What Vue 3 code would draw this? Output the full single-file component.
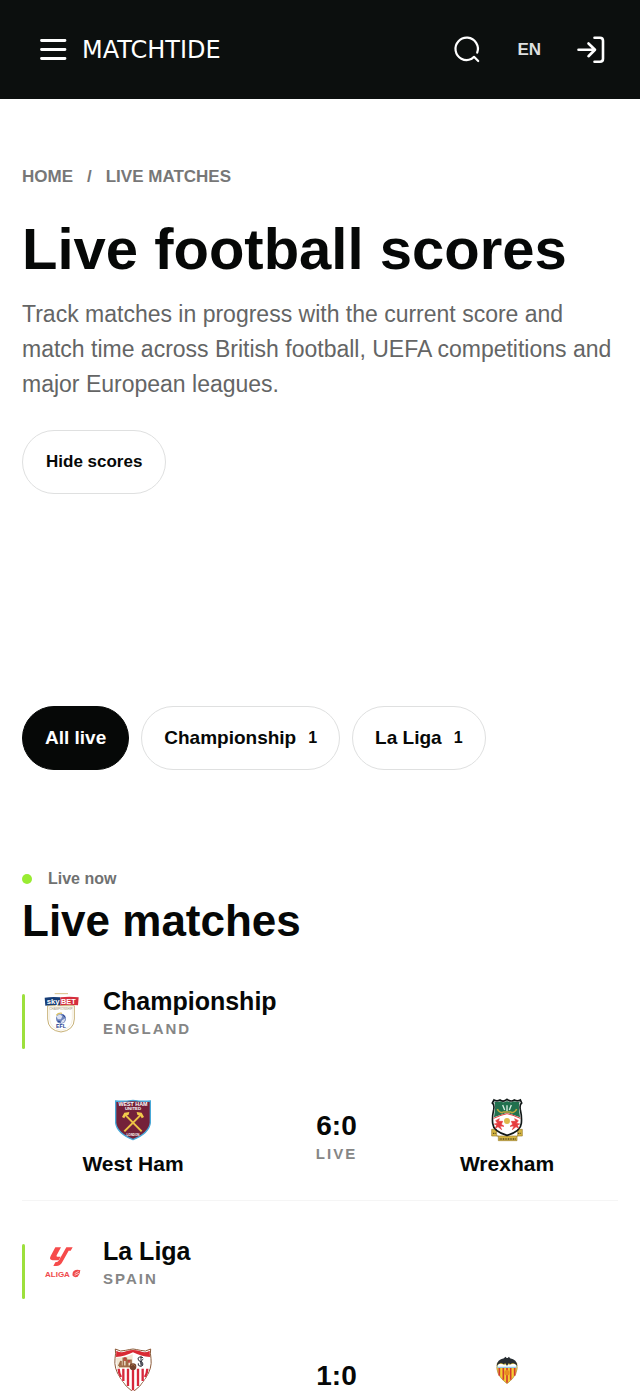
<template>
  <div class="page">
    <header class="topbar">
      <button class="icon-btn" type="button" aria-label="Menu">
        <svg width="28" height="28" viewBox="0 0 28 28" fill="none" stroke="#fff" stroke-width="2.8" stroke-linecap="round">
          <path d="M2.500 4.500h23.500M2.500 13.500h23.500M2.500 22.500h23.500" />
        </svg>
      </button>
      <a class="logo" href="#">MATCHTIDE</a>

      <div class="actions">
        <button class="icon-btn" type="button" aria-label="Search">
          <svg width="28" height="28" viewBox="0 0 28 28" fill="none" stroke="#fff" stroke-width="2.2" stroke-linecap="round" stroke-linejoin="round">
            <path d="M24.2 16.7A11.2 11.2 0 1 0 18.2 23.1L21 20.8L25.2 25" />
          </svg>
        </button>
        <button class="lang" type="button">EN</button>
        <button class="icon-btn" type="button" aria-label="Sign in">
          <svg width="28" height="28" viewBox="0 0 28 28" fill="none" stroke="#fff" stroke-width="2.6" stroke-linecap="round" stroke-linejoin="round">
            <path d="M17.500 1.800H23Q26 1.800 26 4.800V22.800Q26 25.800 23 25.800H17.500" />
            <path d="M1.500 13.800H17.500M11.500 7.500L18 13.800L11.500 20.200" />
          </svg>
        </button>
      </div>
    </header>

    <main class="content">
      <nav class="breadcrumb" aria-label="Breadcrumb">
        <a href="#">HOME</a>
        <span>/</span>
        <a href="#">LIVE MATCHES</a>
      </nav>

      <h1>Live football scores</h1>
      <p class="intro">
        Track matches in progress with the current score and match time across British football,
        UEFA competitions and major European leagues.
      </p>
      <button class="pill toggle" type="button" @click="hidden = !hidden">
        {{ hidden ? 'Show scores' : 'Hide scores' }}
      </button>

      <div class="filters">
        <button
          v-for="f in filters"
          :key="f.name"
          type="button"
          :class="['pill', { active: active === f.name }]"
          @click="active = f.name"
        >
          {{ f.name }}
          <span v-if="f.count" class="count">{{ f.count }}</span>
        </button>
      </div>

      <div class="live-now"><span class="dot"></span>Live now</div>
      <h2>Live matches</h2>

      <section v-for="l in shown" :key="l.name" class="league">
        <div class="league-head">
          <span class="bar"></span>
          <svg v-if="l.name === 'Championship'" class="crest" viewBox="0 0 108 120">
            <path d="M32 2H72" stroke="#d8c088" stroke-width="3" />
            <path d="M11 38V78Q12 112 51 117Q90 112 91 78V38Z" fill="#fff" stroke="#c8b176" stroke-width="3" />
            <path d="M17 42V78Q18 106 51 112Q84 106 85 78V42Z" fill="none" stroke="#eee5cf" stroke-width="2" />
            <path d="M2 14Q26 10 49 13V37Q26 34 4 38Z" fill="#173d77" />
            <path d="M49 13Q76 10 104 13L102 37Q76 34 49 37Z" fill="#d52e3d" />
            <text x="8" y="33" font-size="23" font-weight="700" fill="#fff">sky</text>
            <text x="51" y="33" font-size="22" font-weight="700" fill="#fff">BET</text>
            <text x="51" y="52" font-size="9" text-anchor="middle" fill="#a8997a">CHAMPIONSHIP</text>
            <circle cx="51" cy="77" r="15" fill="#7087bd" />
            <path d="M38 70L48 64L55 70L51 79L41 79ZM54 82L64 76L60 88L50 91Z" fill="#dce2f2" />
            <path d="M37 67Q43 59 54 61" stroke="#d9c064" stroke-width="4" fill="none" />
            <path d="M57 65L63 73M41 84L49 87" stroke="#263f90" stroke-width="3" />
            <text x="51" y="106" font-size="16" font-weight="700" text-anchor="middle" fill="#263e91">EFL</text>
          </svg>
          <svg v-else class="crest" viewBox="0 0 108 120">
            <path d="M34 13H51L38 37Q36 41 40 41H50L44 52H26Q14 50 20 39Z" fill="#f64b4b" />
            <path d="M67 13H86L80 23H74L55 57Q49 69 37 69H28L34 58Q42 58 45 52Z" fill="#f64b4b" />
            <text x="3" y="103" font-size="24" font-weight="700" fill="#f04a4b">ALIGA</text>
            <path d="M89 84Q99 77 109 82Q108 94 101 101Q92 105 86 98Q84 90 89 84Z" fill="#f04a4b" />
            <path d="M92 92L104 85M92 97L105 91" stroke="#fff" stroke-width="2" />
          </svg>
          <div>
            <h3>{{ l.name }}</h3>
            <span class="caption">{{ l.country }}</span>
          </div>
        </div>

        <div v-for="m in l.matches" :key="m.id" class="match">
          <div class="team">
            <svg v-if="m.id === 1" class="crest" viewBox="0 0 108 120">
              <path d="M2 3Q27 5 54 1Q81 5 106 3V68Q103 99 54 119Q5 99 2 68Z" fill="#742139" stroke="#48a9d8" stroke-width="4" />
              <text x="54" y="19" font-size="16" font-weight="700" text-anchor="middle" fill="#fff">WEST HAM</text>
              <text x="54" y="31" font-size="13" font-weight="700" text-anchor="middle" fill="#fff">UNITED</text>
              <path d="M30 44L80 94M78 44L28 94" stroke="#edc345" stroke-width="6" />
              <path d="M21 51L28 38L43 36L41 44L31 48L28 55ZM87 51L80 38L65 36L67 44L77 48L80 55Z" fill="#f2cc4c" />
              <text x="54" y="107" font-size="9" font-weight="700" text-anchor="middle" fill="#fff">LONDON</text>
            </svg>
            <svg v-else class="crest" viewBox="0 0 108 120">
              <path d="M1 -3Q17 7 32 1Q45 -2 54 -3Q63 -2 76 1Q91 7 107 -3Q105 8 108 26Q112 54 92 84Q76 111 54 126Q32 111 16 84Q-4 54 0 26Q3 8 1 -3Z" fill="#fff" stroke="#8c5a39" stroke-width="3" />
              <path d="M4 2Q17 10 33 4Q45 0 54 0Q63 0 76 4Q91 10 104 2L105 21Q78 19 54 7Q30 19 3 21Z" fill="#d92a34" />
              <path d="M5 54H103Q98 89 54 123Q10 89 5 54Z" fill="#fff" />
              <path d="M11 56Q11 68 18 81M25 56V93M39 56V108M54 56V121M69 56V108M83 56V93M97 56Q97 68 90 81" fill="none" stroke="#d7283b" stroke-width="7" />
              <path d="M3 23Q34 24 53 12V54H6Z" fill="#f0e6d2" />
              <path d="M11 48L18 33V48M25 50V25H34V50M38 49V31H48V49M12 49H49" fill="none" stroke="#9f6b46" stroke-width="5" />
              <path d="M30 22V33M42 31V38" stroke="#bf3937" stroke-width="5" />
              <path d="M84 23Q69 18 69 27Q70 34 82 37Q87 48 76 49Q67 47 70 40M78 18V49M85 27Q70 38 84 47" fill="none" stroke="#30313c" stroke-width="3" />
              <circle cx="54" cy="50" r="10" fill="#73432d" />
              <path d="M48 47L55 43L61 49" stroke="#ba8354" stroke-width="2" fill="none" />
            </svg>
            <span v-if="m.home">{{ m.home }}</span>
          </div>

          <div class="result">
            <strong>{{ hidden ? '–:–' : m.score }}</strong>
            <span v-if="m.status" class="caption">{{ m.status }}</span>
          </div>

          <div class="team">
            <svg v-if="m.id === 1" class="crest" viewBox="0 0 108 120">
              <path d="M8 88H23V108H86V88H100V108H84V122H28V108H8Z" fill="#d5b53f" stroke="#9b8135" stroke-width="2" />
              <path d="M15 0Q24 5 33 0Q44 7 54 -2Q65 7 76 0Q85 5 94 0L98 9Q91 14 94 29Q99 51 97 70Q95 94 54 106Q13 94 11 70Q9 51 14 29Q17 14 10 9Z" fill="#fff" stroke="#111817" stroke-width="5" />
              <path d="M16 5Q25 8 34 4Q44 10 54 3Q65 10 75 4Q84 8 92 5Q88 16 91 35L93 52Q70 43 54 38Q38 43 15 52L17 35Q20 18 16 5Z" fill="#21704e" />
              <path d="M54 34V16M47 30L41 15M61 30L67 15" stroke="#d9eee2" stroke-width="4" />
              <path d="M25 27Q30 38 42 38M83 27Q78 38 66 38M41 36H67" stroke="#bda83e" stroke-width="5" fill="none" />
              <path d="M14 55Q38 44 54 41Q70 44 94 55" stroke="#df3c3c" stroke-width="3" fill="none" />
              <circle cx="54" cy="63" r="9" fill="#dfb94a" />
              <path d="M20 62L31 56L28 64L41 64L37 73L45 79L33 78L38 89L27 80L19 85L23 75L16 72L26 70ZM88 62L77 56L80 64L67 64L71 73L63 79L75 78L70 89L81 80L89 85L85 75L92 72L82 70Z" fill="#e63b3e" stroke="#e63b3e" stroke-width="2" />
              <path d="M12 100H21M87 100H96M32 117H80" stroke="#584d26" stroke-width="4" stroke-dasharray="3 2" />
            </svg>
            <svg v-else class="crest" viewBox="0 0 108 120">
              <path d="M25 39Q54 25 83 39Q92 73 54 101Q16 73 25 39Z" fill="#f4cd31" stroke="#a7803c" stroke-width="2" />
              <path d="M31 52V77M43 52V89M54 52V98M65 52V89M77 52V77" stroke="#d23b30" stroke-width="5" />
              <path d="M25 44H83V54H25Z" fill="#96cbe6" />
              <path d="M27 45Q36 37 46 46Q54 39 62 46Q72 37 81 45V50H27Z" fill="#fff" />
              <path d="M23 48Q24 29 45 25L49 20L53 24H56L60 20L63 25Q84 29 85 48Q75 35 64 43L59 40L54 48L49 40L44 43Q32 35 23 48Z" fill="#272d32" />
              <circle cx="54" cy="68" r="8" fill="#e78d22" />
            </svg>
            <span v-if="m.away">{{ m.away }}</span>
          </div>
        </div>
      </section>
    </main>
  </div>
</template>

<script setup>
import { ref, computed } from 'vue';

const hidden = ref(false);
const active = ref('All live');

const filters = [
  { name: 'All live' },
  { name: 'Championship', count: 1 },
  { name: 'La Liga', count: 1 }
];

const leagues = [
  {
    name: 'Championship',
    country: 'ENGLAND',
    matches: [{ id: 1, home: 'West Ham', away: 'Wrexham', score: '6:0', status: 'LIVE' }]
  },
  {
    name: 'La Liga',
    country: 'SPAIN',
    matches: [{ id: 2, score: '1:0' }]
  }
];

const shown = computed(() =>
  active.value === 'All live' ? leagues : leagues.filter(l => l.name === active.value)
);
</script>

<style>
body {
  margin: 0;
  background: #fff;
}
</style>

<style scoped>
.page {
  background: #fff;
  color: #060807;
  font-family: "Liberation Sans", Arial, sans-serif;
}

button {
  font-family: inherit;
  cursor: pointer;
}

a {
  color: inherit;
  text-decoration: none;
}

.topbar {
  display: flex;
  align-items: center;
  height: 99px;
  padding: 0 35px 0 39px;
  background: #0c0f0e;
  color: #fff;
}

.icon-btn,
.lang {
  display: flex;
  padding: 0;
  border: 0;
  background: none;
}

.logo {
  margin-left: 15px;
  font-family: "DejaVu Sans", sans-serif;
  font-size: 24px;
  line-height: 28px;
}

.actions {
  display: flex;
  align-items: center;
  gap: 36px;
  margin-left: auto;
}

.lang {
  color: #dedfdf;
  font-size: 17px;
  font-weight: 700;
  line-height: 20px;
}

.content {
  padding: 68px 22px 0;
}

.breadcrumb {
  display: flex;
  gap: 14px;
  color: #777;
  font-size: 17px;
  font-weight: 700;
  line-height: 20px;
}

h1,
h2,
h3 {
  margin: 0;
  font-weight: 700;
}

h1 {
  margin-top: 33px;
  font-size: 58px;
  line-height: 58px;
}

.intro {
  margin: 19px 0 28px;
  color: #646565;
  font-size: 23px;
  line-height: 35px;
}

.pill {
  display: flex;
  align-items: center;
  gap: 12px;
  height: 64px;
  padding: 0 22px;
  border: 1px solid #dfe0e0;
  border-radius: 32px;
  background: #fff;
  color: #060807;
  font-size: 19px;
  font-weight: 700;
}

.pill.active {
  border-color: #060807;
  background: #060807;
  color: #fff;
}

.toggle {
  padding: 0 23px;
  font-size: 17px;
}

.count {
  font-size: 16px;
}

.filters {
  display: flex;
  flex-wrap: wrap;
  gap: 12px;
  margin: 212px 0 99px;
}

.live-now {
  display: flex;
  align-items: center;
  gap: 16px;
  color: #707171;
  font-size: 16px;
  font-weight: 700;
  line-height: 20px;
}

.dot {
  width: 10px;
  height: 10px;
  border-radius: 50%;
  background: #99ec32;
}

h2 {
  margin: 10px 0 43px;
  font-size: 44px;
  line-height: 44px;
}

.league + .league {
  padding-top: 35px;
}

.league-head {
  display: flex;
  align-items: flex-start;
}

.bar {
  width: 3px;
  height: 55px;
  margin-top: 8px;
  border-radius: 2px;
  background: #9de03c;
}

.crest {
  width: 36px;
  height: 40px;
  overflow: visible;
}

.league-head .crest {
  margin: 7px 23px 0 19px;
}

h3 {
  margin-bottom: 3px;
  font-size: 25px;
  line-height: 30px;
}

.caption {
  display: block;
  color: #858686;
  font-size: 15px;
  font-weight: 700;
  line-height: 20px;
  letter-spacing: 2px;
}

.match {
  display: grid;
  grid-template-columns: 1fr 152px 1fr;
  align-items: start;
  margin-top: 51px;
  padding-bottom: 24px;
  border-bottom: 1px solid #f5f5f5;
}

.league:last-child .match {
  padding-bottom: 0;
  border-bottom: 0;
}

.team {
  display: flex;
  flex-direction: column;
  align-items: center;
  gap: 11px;
  font-size: 21px;
  font-weight: 700;
  line-height: 25px;
}

.result {
  display: flex;
  flex-direction: column;
  align-items: center;
  gap: 2px;
  padding: 10px 0 0 33px;
}

.result strong {
  font-size: 28px;
  line-height: 32px;
}
</style>
